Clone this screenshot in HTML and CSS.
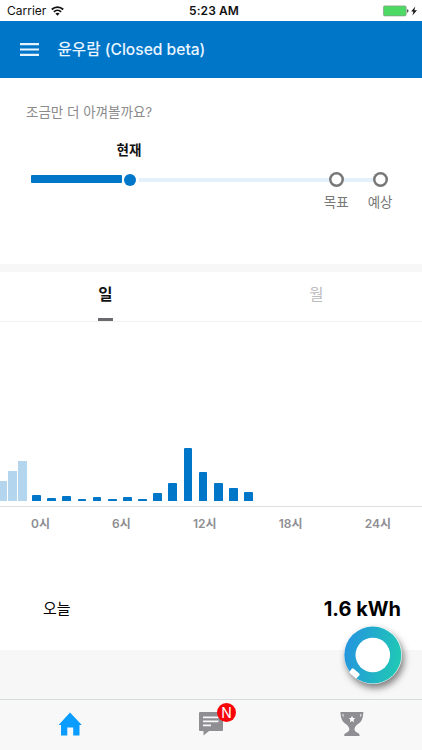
FILE: index.html
```html
<!DOCTYPE html>
<html lang="ko">
<head>
<meta charset="utf-8">
<title>윤우람 (Closed beta)</title>
<link rel="stylesheet" href="styles.css">
</head>
<body>
<div class="app">
  <div class="status">
    <div class="carrier"><span class="carrier-name">Carrier</span>
      <svg width="13" height="10" viewBox="0 0 13 10" fill="none" stroke="#111" stroke-width="1.800"><path d="M.8 3.500C4 .4 9 .4 12.200 3.500M2.900 5.900c2-2 5.200-2 7.200 0"/><path d="M6.500 9.800 4.400 7.600c1.200-1.100 3-1.100 4.200 0z" fill="#111" stroke="none"/></svg>
    </div>
    <div class="clock">5:23 AM</div>
    <div class="power">
      <svg width="35" height="12" viewBox="0 0 35 12"><rect x=".4" y=".9" width="22.800" height="10" rx="1.400" fill="#4cd964" stroke="#8b9b8d" stroke-width=".7"/><path d="M24 4.200c2 .2 2 3.200 0 3.400z" fill="#555"/><path d="M32.300 1.500 28.200 6.600h2.300L29.400 10.500 34 5.200h-2.700z" fill="#111"/></svg>
    </div>
  </div>
  <header class="header">
    <svg class="menu" width="19" height="13" viewBox="0 0 19 13" fill="#e6f4ff"><path d="M0 0h19v2.200H0zM0 5.400h19v2.200H0zM0 10.800h19V13H0z"/></svg>
    <h1 class="title">윤우람 (Closed beta)</h1>
  </header>
  <section class="goal">
    <p class="goal-text">조금만 더 아껴볼까요?</p>
    <div class="now">현재</div>
    <div class="track">
      <i class="fill"></i><i class="dot"></i><i class="line line-long"></i><i class="ring"></i><i class="line line-short"></i><i class="ring"></i>
    </div>
    <div class="marks"><span>목표</span><span>예상</span></div>
  </section>
  <nav class="tabs">
    <div class="tab active"><span>일</span></div>
    <div class="tab"><span>월</span></div>
  </nav>
  <section class="usage">
    <div class="chart">
      <div class="previous"><i style="height:20px"></i><i style="height:30.5px"></i><i style="height:40.5px"></i></div>
      <div class="hours">
        <i style="height:6px"></i><i style="height:3px"></i><i style="height:5px"></i><i style="height:2.500px"></i><i style="height:4px"></i><i style="height:2.500px"></i><i style="height:4px"></i><i style="height:2.500px"></i><i style="height:8px"></i><i style="height:18.500px"></i><i style="height:53px"></i><i style="height:29px"></i><i style="height:18px"></i><i style="height:13px"></i><i style="height:9.500px"></i>
      </div>
    </div>
    <div class="axis"><span>0시</span><span>6시</span><span>12시</span><span>18시</span><span>24시</span></div>
    <div class="today"><span class="today-label">오늘</span><strong class="today-value">1.6 kWh</strong></div>
  </section>
  <footer class="tabbar">
    <div class="item"><svg width="24" height="24" viewBox="0 0 24 24"><path d="M12 .5 23.800 13H21.500v10.500h-6.300v-8H9.300v8H3V13H.6z" fill="#0a9cff"/></svg></div>
    <div class="item"><span class="chat"><svg width="24" height="24" viewBox="0 0 24 24"><path d="M1 0h22a1 1 0 0 1 1 1v17a1 1 0 0 1-1 1H10l-5.500 4.500V19H1a1 1 0 0 1-1-1V1a1 1 0 0 1 1-1z" fill="#8e8e93"/><path d="M4 4.500h15.500v1.800H4zM4 8.500h15.500v1.800H4zM4 12.500h8v1.800H4z" fill="#f8f8f8"/></svg><b class="badge">N</b></span></div>
    <div class="item"><svg width="24" height="24" viewBox="0 0 24 24"><path d="M.4 0h23c-.2 4-.9 7-2.400 9.200-1.200 1.700-3.500 2.600-4.800 4.300-1 1.300-1.700 2.600-1.800 4 .7 2 1.500 2.600 3 3.200 1.500.5 2.200 1.400 2.200 3.300H4.200c0-1.900.7-2.800 2.200-3.300 1.500-.6 2.300-1.200 3-3.200-.1-1.400-.8-2.700-1.800-4C6.300 11.800 4 10.900 2.800 9.200 1.300 7 .6 4 .4 0z" fill="#8e8e93"/><path d="M2.300 2c.2 1.600.6 2.500 1.300 3.300L3.400 2zM21.500 2c-.2 1.600-.6 2.500-1.300 3.300l.2-3.300z" fill="#f8f8f8"/><path d="m12 3.800 1 2.200 2.300.2-1.800 1.600.6 2.500L12 9l-2.100 1.300.6-2.500-1.800-1.600L11 6z" fill="#fff"/></svg></div>
  </footer>
  <div class="fab"><svg width="58" height="58" viewBox="0 0 58 58"><defs><linearGradient id="g" x1="0" y1=".3" x2="1" y2=".5"><stop offset="0" stop-color="#2594df"/><stop offset="1" stop-color="#1fc8b5"/></linearGradient></defs><circle cx="28.800" cy="29" r="28.500" fill="url(#g)"/><circle cx="28.800" cy="29" r="17.300" fill="#fff"/><rect x="-5" y="-2.900" width="10" height="5.800" rx="1.300" fill="#fff" transform="translate(10.500 47.300) rotate(42)"/></svg></div>
</div>
</body>
</html>
```
FILE: styles.css
```css
* { box-sizing: border-box; }
body {
  margin: 0;
  background: #f7f7f7;
  font-family: Inter, "Noto Sans CJK KR", sans-serif;
  color: #111;
}
i { display: block; flex: none; }
svg { display: block; }
.app {
  position: relative;
  display: flex;
  flex-direction: column;
  width: 422px;
  height: 750px;
  overflow: hidden;
}
.status {
  display: grid;
  grid-template-columns: 1fr auto 1fr;
  align-items: center;
  height: 21px;
  padding: 1px 4px 0 7px;
  background: #fff;
  font-size: 12px;
  line-height: 20px;
}
.carrier { display: flex; align-items: center; gap: 5px; }
.carrier-name { font-size: 12px; }
.clock { padding-left: 3px; font-weight: 600; font-size: 12px; letter-spacing: .1px; }
.power { justify-self: end; }
.header {
  display: flex;
  align-items: center;
  gap: 18.500px;
  height: 57px;
  padding: 0 20px;
  background: #0076c9;
}
.title {
  margin: 0;
  color: #e9f5ff;
  font-size: 15.600px;
  font-weight: 500;
  line-height: 22px;
}
.goal { height: 186px; padding: 24px 26px 0; background: #fff; }
.goal-text { margin: 0; color: #8b8b8b; font-size: 13.500px; line-height: 20px; }
.now {
  width: 60px;
  margin: 18px 0 0 73px;
  text-align: center;
  font-size: 13.500px;
  font-weight: 700;
  line-height: 20px;
}
.track { display: flex; align-items: center; height: 15px; margin: 12px 0 0 5px; }
.fill { width: 91px; height: 8px; margin: 0 2px 1px 0; border-radius: 1px; background: #0076c9; }
.dot { width: 12px; height: 12px; border-radius: 50%; background: #0076c9; }
.line { height: 4px; background: #e3f1fc; }
.line-long { width: 190px; margin-left: 3px; }
.line-short { width: 29px; }
.ring { width: 15px; height: 15px; border-radius: 50%; background: #fff; box-shadow: inset 0 0 0 2.500px #777; }
.marks {
  display: flex;
  justify-content: flex-end;
  gap: 19px;
  margin: 5px 3.500px 0 0;
  color: #777;
  font-size: 13.500px;
  line-height: 20px;
}
.tabs {
  display: flex;
  height: 50px;
  margin-top: 8px;
  border-bottom: 1px solid #f1f1f1;
  background: #fff;
}
.tab {
  flex: 1;
  display: flex;
  justify-content: center;
  color: #bdbdbd;
  font-size: 15.500px;
  line-height: 46px;
}
.active { color: #111; font-weight: 700; }
.active span { height: 49px; border-bottom: 3px solid #6b6b6f; }
.usage { height: 328px; background: #fff; }
.chart {
  display: flex;
  align-items: flex-end;
  gap: 5px;
  height: 185px;
  padding-bottom: 5px;
  border-bottom: 1px solid #dedede;
}
.previous { display: flex; align-items: flex-end; gap: 1.500px; margin-left: -2px; }
.previous i { width: 8.700px; background: #b3d5ee; }
.hours { display: flex; align-items: flex-end; gap: 6.480px; }
.hours i { width: 8.700px; border-radius: 1px 1px 0 0; background: #0076c9; }
.axis {
  display: flex;
  justify-content: space-between;
  height: 35px;
  padding: 7px 31px 0;
  color: #8e8e93;
  font-size: 12px;
  font-weight: 600;
  line-height: 20px;
}
.today {
  display: flex;
  justify-content: space-between;
  align-items: center;
  height: 108px;
  padding: 26px 21px 0 43px;
  color: #000;
  line-height: 28px;
}
.today-label { font-size: 15px; }
.today-value { font-size: 20px; font-weight: 700; }
.tabbar {
  display: flex;
  height: 51px;
  margin-top: auto;
  border-top: 1px solid #d6dbdd;
  background: #f8f8f8;
}
.item { flex: 1; display: flex; justify-content: center; padding-top: 12px; }
.chat { position: relative; width: 24px; height: 24px; }
.badge {
  position: absolute;
  top: -9px;
  right: -13px;
  width: 19px;
  height: 19px;
  border-radius: 50%;
  background: #f70508;
  color: #fff;
  font-size: 14px;
  font-weight: 400;
  line-height: 19px;
  text-align: center;
}
.fab { position: absolute; left: 344px; top: 626px; border-radius: 50%; box-shadow: 2px 4px 7px rgba(0, 0, 0, .5); }
```
